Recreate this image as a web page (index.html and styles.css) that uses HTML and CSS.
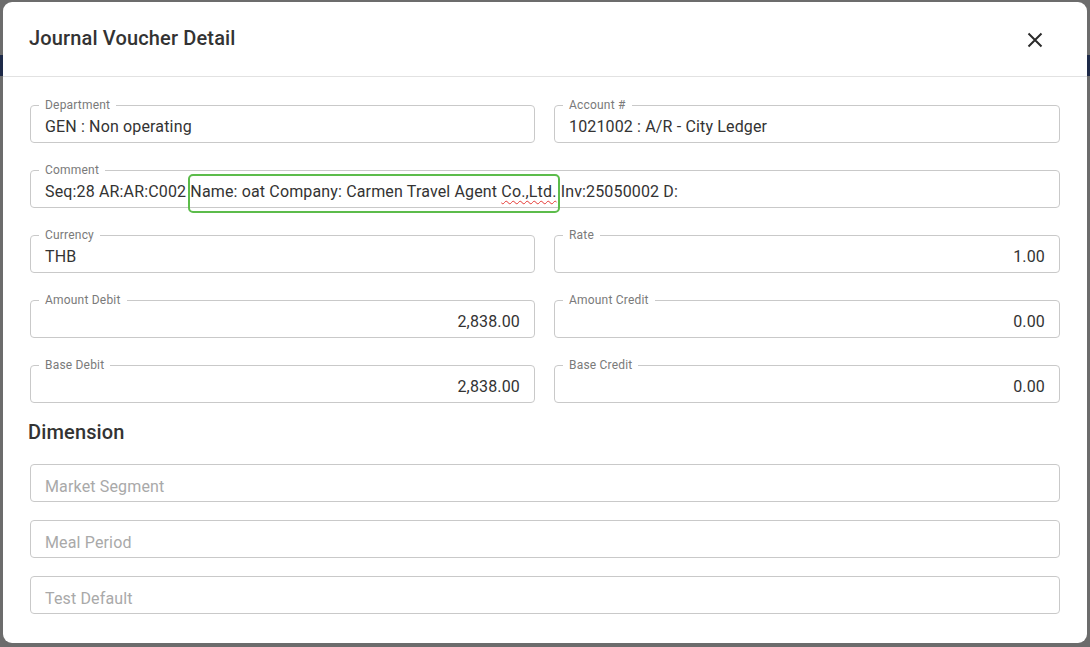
FILE: index.html
```html
<!DOCTYPE html>
<html>
<head>
<meta charset="utf-8">
<link rel="stylesheet" href="styles.css">
</head>
<body>
<div class="dialog">
  <div class="header">
    <h1 class="title">Journal Voucher Detail</h1>
    <button class="close" aria-label="Close">
      <svg width="16" height="16" viewBox="0 0 16 16"><path d="M1.5 1.5 L14.5 14.5 M14.5 1.5 L1.5 14.5" stroke="#2b2b2b" stroke-width="2" fill="none"/></svg>
    </button>
  </div>
  <div class="body">
    <div class="grid">
      <fieldset class="field"><legend>Department</legend><div class="value">GEN : Non operating</div></fieldset>
      <fieldset class="field"><legend>Account #</legend><div class="value">1021002 : A/R - City Ledger</div></fieldset>
      <fieldset class="field full"><legend>Comment</legend><div class="value">Seq:28 AR:AR:C002 <span class="hl">Name: oat Company: Carmen Travel Agent <span class="spell">Co.,Ltd.</span></span> Inv:25050002 D:</div></fieldset>
      <fieldset class="field"><legend>Currency</legend><div class="value">THB</div></fieldset>
      <fieldset class="field"><legend>Rate</legend><div class="value num">1.00</div></fieldset>
      <fieldset class="field"><legend>Amount Debit</legend><div class="value num">2,838.00</div></fieldset>
      <fieldset class="field"><legend>Amount Credit</legend><div class="value num">0.00</div></fieldset>
      <fieldset class="field"><legend>Base Debit</legend><div class="value num">2,838.00</div></fieldset>
      <fieldset class="field"><legend>Base Credit</legend><div class="value num">0.00</div></fieldset>
    </div>
    <h2 class="section">Dimension</h2>
    <div class="dims">
      <div class="box">Market Segment</div>
      <div class="box">Meal Period</div>
      <div class="box">Test Default</div>
    </div>
  </div>
</div>
</body>
</html>
```
FILE: styles.css
```css
* { box-sizing: border-box; }
html, body { margin: 0; padding: 0; }
body {
  width: 1090px;
  height: 647px;
  overflow: hidden;
  font-family: Roboto, "Liberation Sans", sans-serif;
  background:
    linear-gradient(to bottom, transparent 0, transparent 55px, #1e2a48 55px, #1e2a48 76px, transparent 76px),
    #6c6c6c;
  padding: 2px 3px 0 3px;
}
.dialog {
  width: 1084px;
  height: 641px;
  background: #fff;
  border-radius: 9px;
  overflow: hidden;
}
.header {
  height: 75px;
  border-bottom: 1px solid #e2e2e2;
  display: flex;
  align-items: center;
  justify-content: space-between;
  padding: 0 44px 2px 26px;
}
.title {
  margin: 0;
  font-size: 20px;
  font-weight: 500;
  color: #333;
  letter-spacing: 0.15px;
}
.close {
  border: 0;
  background: none;
  padding: 0;
  width: 16px;
  height: 16px;
  display: flex;
  margin-top: 3px;
}
.body {
  padding: 22px 27px 0 27px;
}
.grid {
  display: grid;
  grid-template-columns: 505px 506px;
  column-gap: 19px;
  row-gap: 21px;
}
.field {
  margin: 0;
  border: 1px solid #c9c9c9;
  border-radius: 4px;
  padding: 0 14px 0 8px;
  height: 44px;
  min-width: 0;
}
.field.full { grid-column: 1 / 3; }
.field legend {
  font-size: 12px;
  line-height: 12px;
  color: #7a7a7a;
  padding: 0 6px;
  margin-left: 0;
  letter-spacing: 0.2px;
}
.value {
  font-size: 16px;
  line-height: 19px;
  color: #333;
  padding: 6px 0 0 6px;
  white-space: nowrap;
  letter-spacing: 0.15px;
}
.value.num { text-align: right; padding-right: 0; }
.hl { position: relative; }
.hl::after {
  content: "";
  position: absolute;
  left: -2px;
  right: -3px;
  top: -8px;
  height: 35px;
  border: 2.5px solid #5cbc4b;
  border-radius: 5px;
}
.spell {
  text-decoration: underline wavy #e53935;
  text-decoration-thickness: 1px;
  text-underline-offset: 3px;
}
.section {
  margin: 17px 0 20px -2px;
  font-size: 20px;
  line-height: 24px;
  font-weight: 500;
  color: #333;
  letter-spacing: 0.15px;
}
.dims {
  display: flex;
  flex-direction: column;
  gap: 18px;
}
.box {
  height: 38px;
  border: 1px solid #c9c9c9;
  border-radius: 4px;
  padding: 12px 14px 0 14px;
  font-size: 16px;
  line-height: 19px;
  color: #a9a9a9;
  letter-spacing: 0.15px;
}
```
